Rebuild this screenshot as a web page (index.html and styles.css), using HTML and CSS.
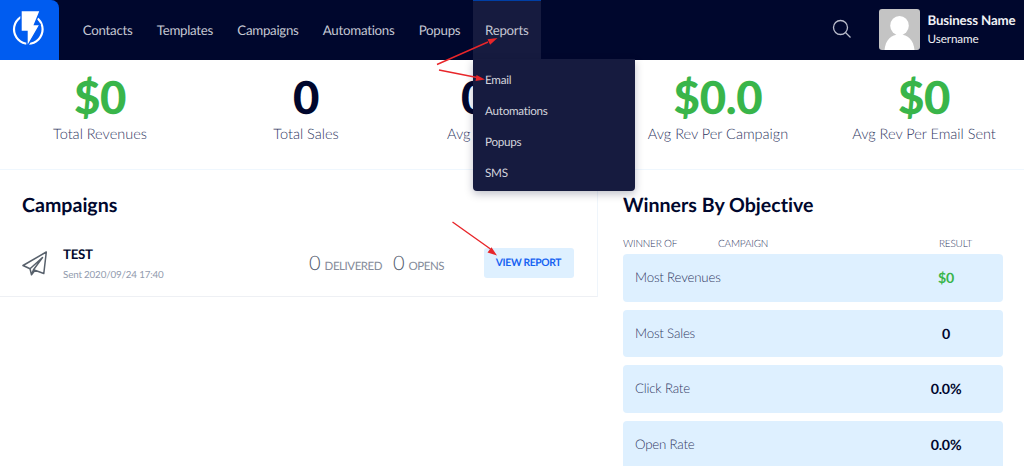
FILE: index.html
```html
<!DOCTYPE html>
<html lang="en">
<head>
<meta charset="utf-8">
<title>Dashboard</title>
<link rel="stylesheet" href="styles.css">
</head>
<body>
<header class="topbar">
  <a class="logo">
    <svg width="34" height="38" viewBox="0 0 34 38">
      <circle cx="17.300" cy="20.300" r="14.300" fill="none" stroke="#fff" stroke-width="2.200"/>
      <path d="M10 1.500H29.300l-5.800 14h5.500L16 38V22.500H10Z" fill="#fff" stroke="#005cf0" stroke-width="1.400"/>
    </svg>
  </a>
  <nav class="nav">
    <a class="nav-item">Contacts</a>
    <a class="nav-item">Templates</a>
    <a class="nav-item">Campaigns</a>
    <a class="nav-item">Automations</a>
    <a class="nav-item">Popups</a>
    <div class="nav-item open">Reports
      <div class="menu">
        <a>Email</a>
        <a>Automations</a>
        <a>Popups</a>
        <a>SMS</a>
      </div>
    </div>
  </nav>
  <svg class="search" width="20" height="20" viewBox="0 0 20 20" fill="none" stroke="#b9bccb" stroke-width="1.300">
    <circle cx="8.500" cy="8.500" r="7"/><path d="M13.500 13.500l5 5"/>
  </svg>
  <svg class="avatar" width="41" height="41" viewBox="0 0 41 41">
    <rect width="41" height="41" fill="#c4c4c4"/>
    <path d="M5.500 41C6.500 31 12 25.500 20.500 25.500S34.500 31 35.500 41Z" fill="#fff"/>
    <ellipse cx="20.500" cy="16.700" rx="9.300" ry="9.700" fill="#fff"/>
  </svg>
  <div class="account">
    <div class="business">Business Name</div>
    <div class="user">Username</div>
  </div>
</header>
<section class="stats">
  <div class="stat"><div class="value money">$0</div><div class="label">Total Revenues</div></div>
  <div class="stat"><div class="value">0</div><div class="label">Total Sales</div></div>
  <div class="stat covered"><div class="value">0</div><div class="label">Avg</div></div>
  <div class="stat"><div class="value money">$0.0</div><div class="label">Avg Rev Per Campaign</div></div>
  <div class="stat"><div class="value money">$0</div><div class="label">Avg Rev Per Email Sent</div></div>
</section>
<main class="panels">
  <section class="campaigns">
    <h2>Campaigns</h2>
    <div class="campaign">
      <svg class="plane" width="26" height="26" viewBox="0 0 26 26" fill="none" stroke="#58616c" stroke-width="1.500" stroke-linejoin="round">
        <path d="M24.300 2L1 15.500l7 3.200L20.500 7.500l-9 12.300 10.300 3.700L24.300 2ZM8 18.700l1.500 6 3.500-4.300M9.500 24.500l2-4.700"/>
      </svg>
      <div class="info"><div class="name">TEST</div><div class="sent">Sent 2020/09/24 17:40</div></div>
      <div class="count delivered"><b>0</b><span>DELIVERED</span></div>
      <div class="count opens"><b>0</b><span>OPENS</span></div>
      <a class="report">VIEW REPORT</a>
    </div>
  </section>
  <section class="winners">
    <h2>Winners By Objective</h2>
    <div class="heads"><span>WINNER OF</span><span>CAMPAIGN</span><span class="result">RESULT</span></div>
    <div class="winner"><span>Most Revenues</span><b class="money">$0</b></div>
    <div class="winner"><span>Most Sales</span><b>0</b></div>
    <div class="winner"><span>Click Rate</span><b>0.0%</b></div>
    <div class="winner"><span>Open Rate</span><b>0.0%</b></div>
  </section>
</main>
<svg class="arrows" width="1024" height="466" viewBox="0 0 1024 466">
  <g stroke="#e8262a" stroke-width="1.400" fill="none"><path d="M437 64.500L488 42M439 70l38 7.500M452.500 222l38 27"/></g>
  <g fill="#e8262a"><path d="M497.500 38l-10 1.200 2.600 5.600zM485 79.500l-8.500-4.500-1 6zM497 255.500l-5.500-8.300-4 5.400z"/></g>
</svg>
</body>
</html>
```
FILE: styles.css
```css
* { box-sizing: border-box; }
body { margin: 0; height: 466px; overflow: hidden; position: relative; background: #fff; font-family: Lato, sans-serif; color: #00072d; text-rendering: geometricPrecision; font-variant-ligatures: none; }
h2 { margin: 0; font-size: 19.600px; font-weight: 700; line-height: 25px; height: 24px; }
.topbar { height: 59.500px; display: flex; align-items: center; background: #00072d; }
.logo { flex: 0 0 59px; height: 100%; padding: 9px 0 0 11px; background: #005cf0; border-top-right-radius: 8px; }
.logo svg { display: block; }
.nav { display: flex; flex: 0 0 482px; min-width: 0; height: 100%; padding-left: 11.700px; font-size: 13.300px; letter-spacing: -.27px; color: #c5c7d3; }
.nav-item { padding: 0 12.100px; line-height: 61px; }
.open { position: relative; flex: 0 0 68px; margin-left: auto; padding: 0 0 0 12px; background: #161b3f; border-top: 1px solid #003fa5; line-height: 59px; }
.menu { position: absolute; z-index: 2; top: 58px; left: 0; width: 162px; height: 132px; padding: 6px 12px; background: #161b3f; border-radius: 0 0 4px 4px; box-shadow: 0 3px 8px rgba(0,7,45,.25); font-size: 11.700px; color: #d2d3dc; }
.menu a { display: block; height: 30.900px; line-height: 31px; }
.search { flex: none; margin-left: 291px; margin-top: -2px; }
.avatar { flex: none; margin-left: 26.500px; margin-top: -1px; border-radius: 3px; }
.account { margin-left: 8px; margin-top: -2px; white-space: nowrap; color: #f0f1f5; }
.business { font-size: 13.300px; letter-spacing: -.15px; font-weight: 700; line-height: 20px; }
.user { font-size: 11.700px; letter-spacing: -.1px; line-height: 18px; }
.stats { display: flex; height: 110px; margin-left: -3px; border-bottom: 1px solid #eff7fe; }
.stat { flex: 0 0 206px; text-align: center; padding-top: 10px; }
.covered { text-align: left; padding-left: 38px; }
.covered .value { padding-left: 14px; }
.value { font-size: 45.500px; font-weight: 900; line-height: 54px; letter-spacing: -.3px; }
.money { color: #39b54a; }
.label { font-size: 14.500px; font-weight: 300; line-height: 21px; color: #30375f; }
.panels { display: flex; }
.campaigns { flex: 0 0 598px; min-width: 0; height: 127px; padding: 23px 24px 0 22px; border-right: 1px solid #eff5fb; border-bottom: 1px solid #eef0f4; }
.campaign { display: flex; align-items: center; height: 48px; margin-top: 22px; }
.plane { flex: none; }
.info { flex: 0 0 246px; padding: 4px 0 0 15px; }
.name { font-size: 13.300px; letter-spacing: -.3px; font-weight: 700; line-height: 18px; padding-bottom: 3px; }
.sent { font-size: 9.800px; letter-spacing: -.16px; line-height: 18px; color: #929bae; }
.count { display: flex; align-items: baseline; gap: 4px; padding-left: 15px; color: #858c9a; font-size: 11.500px; letter-spacing: -.45px; }
.delivered { flex: 0 0 99px; }
.opens { flex: 0 0 90.500px; padding-left: 0; }
.count b { font-size: 20px; letter-spacing: 0; font-weight: 300; color: #50596b; }
.report { width: 90px; flex-shrink: 0; height: 30px; border-radius: 3px; background: #def0ff; color: #1663f2; font-size: 10.300px; letter-spacing: -.35px; font-weight: 700; line-height: 31px; text-align: center; }
.winners { flex: 0 0 405px; padding: 23px 0 0 25px; }
.heads { display: flex; width: 380px; height: 17.500px; margin-top: 20px; font-size: 10px; letter-spacing: -.2px; line-height: 14px; font-weight: 300; color: #30375f; }
.heads span { width: 95px; }
.heads .result { margin-left: 126px; width: 60px; }
.winner { display: flex; justify-content: space-between; width: 380px; height: 47.700px; margin-bottom: 8px; padding: 0 12px; background: #def0ff; border-radius: 4px; font-size: 13.300px; letter-spacing: -.2px; line-height: 46px; color: #00072d; }
.winner span { font-weight: 300; color: #30375f; }
.winner b { width: 90px; text-align: center; font-size: 14.200px; line-height: 49px; }
.winner .money { color: #39b54a; }
.arrows { position: absolute; z-index: 3; top: 0; left: 0; pointer-events: none; }
```
